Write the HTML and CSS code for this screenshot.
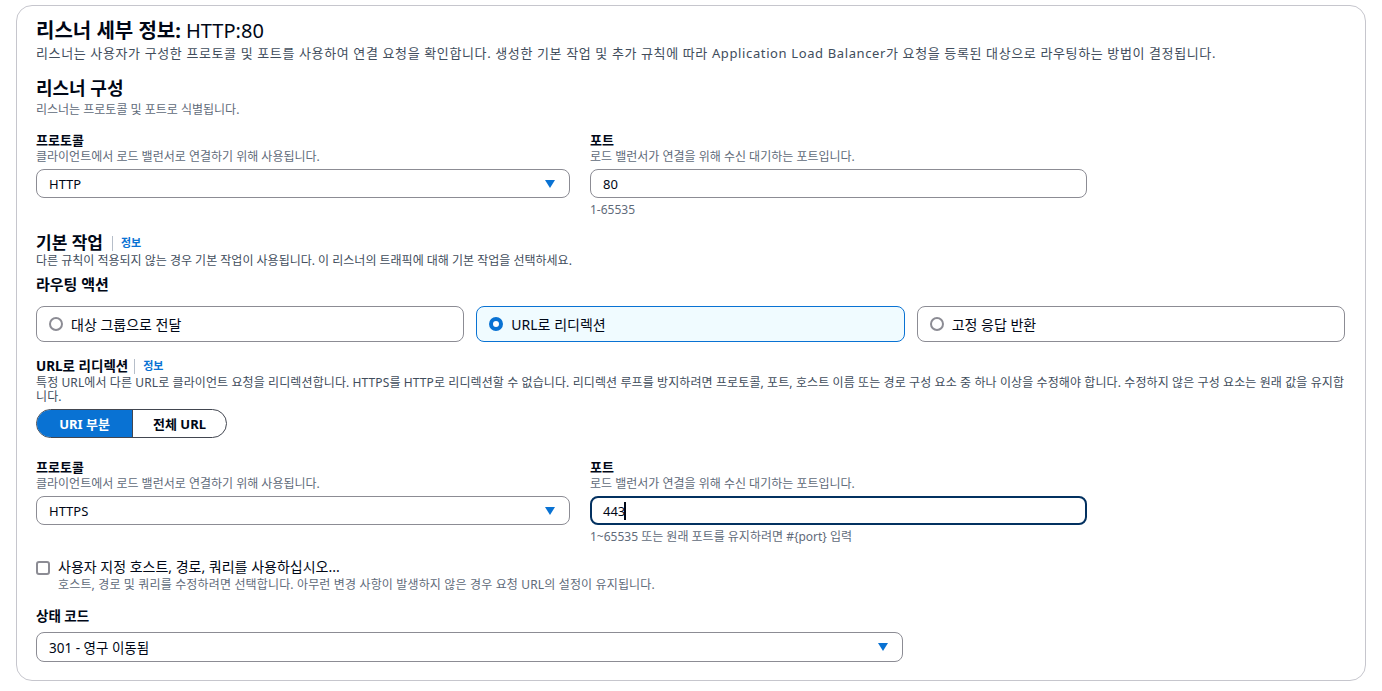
FILE: index.html
```html
<!DOCTYPE html>
<html>
<head>
    <link rel="stylesheet" href="styles.css">
</head>
<body>
    <div class="panel">
        <h1 class="panel-title">리스너 세부 정보: <span class="title-value">HTTP:80</span></h1>
        <p class="panel-desc">리스너는 사용자가 구성한 프로토콜 및 포트를 사용하여 연결 요청을 확인합니다. 생성한 기본 작업 및 추가 규칙에 따라 Application Load Balancer가 요청을 등록된 대상으로 라우팅하는 방법이 결정됩니다.</p>

        <h2 class="section-title">리스너 구성</h2>
        <p class="section-desc">리스너는 프로토콜 및 포트로 식별됩니다.</p>

        <div class="field-row row-first">
            <div class="field">
                <div class="field-label">프로토콜</div>
                <div class="field-desc">클라이언트에서 로드 밸런서로 연결하기 위해 사용됩니다.</div>
                <div class="select">
                    <span>HTTP</span>
                    <span class="caret"></span>
                </div>
            </div>
            <div class="field">
                <div class="field-label">포트</div>
                <div class="field-desc">로드 밸런서가 연결을 위해 수신 대기하는 포트입니다.</div>
                <div class="input">80</div>
                <div class="field-hint">1-65535</div>
            </div>
        </div>

        <h3 class="action-title">기본 작업 <span class="divider"></span><a class="info-link">정보</a></h3>
        <p class="action-desc">다른 규칙이 적용되지 않는 경우 기본 작업이 사용됩니다. 이 리스너의 트래픽에 대해 기본 작업을 선택하세요.</p>

        <div class="routing-title">라우팅 액션</div>
        <div class="tiles">
            <div class="tile">
                <span class="radio"></span>
                <span>대상 그룹으로 전달</span>
            </div>
            <div class="tile selected">
                <span class="radio"></span>
                <span>URL로 리디렉션</span>
            </div>
            <div class="tile">
                <span class="radio"></span>
                <span>고정 응답 반환</span>
            </div>
        </div>

        <div class="redirect-title">URL로 리디렉션 <span class="divider"></span><a class="info-link">정보</a></div>
        <p class="redirect-desc">특정 URL에서 다른 URL로 클라이언트 요청을 리디렉션합니다. HTTPS를 HTTP로 리디렉션할 수 없습니다. 리디렉션 루프를 방지하려면 프로토콜, 포트, 호스트 이름 또는 경로 구성 요소 중 하나 이상을 수정해야 합니다. 수정하지 않은 구성 요소는 원래 값을 유지합니다.</p>

        <div class="segmented">
            <div class="segment active">URI 부분</div>
            <div class="segment">전체 URL</div>
        </div>

        <div class="field-row row-second">
            <div class="field">
                <div class="field-label">프로토콜</div>
                <div class="field-desc">클라이언트에서 로드 밸런서로 연결하기 위해 사용됩니다.</div>
                <div class="select">
                    <span>HTTPS</span>
                    <span class="caret"></span>
                </div>
            </div>
            <div class="field">
                <div class="field-label">포트</div>
                <div class="field-desc">로드 밸런서가 연결을 위해 수신 대기하는 포트입니다.</div>
                <div class="input focused">443<span class="text-cursor"></span></div>
                <div class="field-hint">1~65535 또는 원래 포트를 유지하려면 #{port} 입력</div>
            </div>
        </div>

        <div class="check-row">
            <span class="checkbox"></span>
            <div>
                <div class="check-label">사용자 지정 호스트, 경로, 쿼리를 사용하십시오...</div>
                <div class="check-desc">호스트, 경로 및 쿼리를 수정하려면 선택합니다. 아무런 변경 사항이 발생하지 않은 경우 요청 URL의 설정이 유지됩니다.</div>
            </div>
        </div>

        <div class="status-label">상태 코드</div>
        <div class="select status-select">
            <span>301 - 영구 이동됨</span>
            <span class="caret"></span>
        </div>
    </div>
</body>
</html>
```

FILE: styles.css
```css
* {
    box-sizing: border-box;
    margin: 0;
    padding: 0;
}

body {
    font-family: "Noto Sans", "Noto Sans CJK KR", sans-serif;
    color: #000716;
    background: white;
    height: 100vh;
    overflow: hidden;
}

.panel {
    margin: 5px 16px 0 16px;
    padding: 13px 20px 20px 19px;
    border: 1px solid #c6c6cd;
    border-radius: 16px;
    height: 676px;
}

.panel-title {
    font-size: 20px;
    line-height: 24px;
    font-weight: 700;
}

.title-value {
    font-weight: 400;
}

.panel-desc {
    font-size: 13px;
    line-height: 18px;
    letter-spacing: 0.62px;
    color: #414d5c;
    margin-top: 1px;
}

.section-title {
    font-size: 18px;
    line-height: 22px;
    font-weight: 700;
    margin-top: 15px;
}

.section-desc {
    font-size: 12px;
    line-height: 16px;
    color: #5f6b7a;
    margin-top: 3px;
}

.field-row {
    display: grid;
    grid-template-columns: 534px 497px;
    column-gap: 20px;
}

.row-first {
    margin-top: 14px;
}

.row-second {
    margin-top: 21px;
}

.field-label {
    font-size: 13px;
    line-height: 17px;
    font-weight: 700;
}

.field-desc {
    font-size: 12px;
    line-height: 16px;
    color: #5f6b7a;
}

.field-hint {
    font-size: 12px;
    line-height: 16px;
    color: #5f6b7a;
    margin-top: 4px;
}

.select,
.input {
    display: flex;
    align-items: center;
    justify-content: space-between;
    height: 29px;
    margin-top: 4px;
    padding: 0 14px 0 12px;
    border: 1px solid #8c8c94;
    border-radius: 8px;
    font-size: 13px;
    background: white;
}

.input {
    justify-content: flex-start;
}

.input.focused {
    border: 2px solid #033160;
    padding-left: 11px;
}

.text-cursor {
    display: inline-block;
    width: 2px;
    height: 18px;
    margin-left: -1px;
    background: #000716;
}

.caret {
    width: 0;
    height: 0;
    border-left: 5px solid transparent;
    border-right: 5px solid transparent;
    border-top: 8px solid #0972d3;
}

.action-title {
    display: flex;
    align-items: center;
    font-size: 17px;
    line-height: 20px;
    font-weight: 700;
    margin-top: 15px;
}

.divider {
    display: inline-block;
    width: 1px;
    height: 15px;
    background: #b6bec9;
    margin: 0 8px 0 9px;
}

.info-link {
    font-size: 11px;
    font-weight: 700;
    color: #0972d3;
}

.action-desc {
    font-size: 12px;
    line-height: 16px;
    color: #414d5c;
}

.routing-title {
    font-size: 15px;
    line-height: 20px;
    font-weight: 700;
    margin-top: 5px;
}

.tiles {
    display: grid;
    grid-template-columns: repeat(3, 1fr);
    gap: 12px;
    margin-top: 12px;
}

.tile {
    display: flex;
    align-items: center;
    gap: 8px;
    height: 36px;
    padding: 0 12px;
    border: 1px solid #8c8c94;
    border-radius: 8px;
    font-size: 14px;
}

.tile.selected {
    border-color: #0972d3;
    background: #f0fbff;
}

.radio {
    width: 14px;
    height: 14px;
    border: 2px solid #8c8c94;
    border-radius: 50%;
    background: white;
}

.tile.selected .radio {
    border: 4px solid #0972d3;
}

.redirect-title {
    display: flex;
    align-items: center;
    font-size: 13.5px;
    line-height: 16px;
    font-weight: 700;
    margin-top: 16px;
}

.redirect-title .divider {
    margin: 0 8px 0 6px;
}

.redirect-desc {
    font-size: 12px;
    line-height: 14px;
    letter-spacing: 0.1px;
    color: #414d5c;
    margin-top: 2px;
}

.segmented {
    display: flex;
    width: 191px;
    height: 29px;
    margin-top: 5px;
    border: 1px solid #424650;
    border-radius: 15px;
    overflow: hidden;
}

.segment {
    display: flex;
    align-items: center;
    justify-content: center;
    flex: 1;
    font-size: 13px;
    font-weight: 700;
}

.segment.active {
    flex: 0 0 96px;
    background: #0972d3;
    color: white;
    border-right: 1px solid #424650;
}

.check-row {
    display: flex;
    gap: 8px;
    margin-top: 13px;
}

.checkbox {
    flex: none;
    width: 14px;
    height: 14px;
    margin-top: 3px;
    border: 2px solid #8c8c94;
    border-radius: 3px;
}

.check-label {
    font-size: 14px;
    line-height: 18px;
}

.check-desc {
    font-size: 12px;
    line-height: 17px;
    letter-spacing: 0.15px;
    color: #5f6b7a;
}

.status-label {
    font-size: 13.5px;
    line-height: 18px;
    font-weight: 700;
    margin-top: 14px;
}

.status-select {
    width: 867px;
    margin-top: 7px;
    height: 30px;
    font-size: 13.5px;
}
```
